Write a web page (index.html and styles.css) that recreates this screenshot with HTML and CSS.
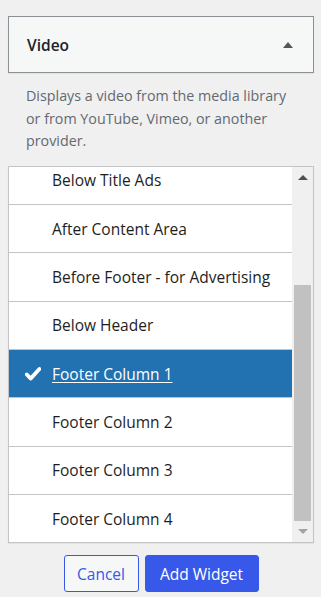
FILE: index.html
```html
<!DOCTYPE html>
<html lang="en">
<head>
<meta charset="utf-8">
<title>Video widget</title>
<link rel="stylesheet" href="styles.css">
</head>
<body>
<div class="panel">
  <div class="widget-head">
    <h3 class="widget-title">Video</h3>
    <span class="toggle-arrow"></span>
  </div>
  <p class="widget-desc">Displays a video from the media library or from YouTube, Vimeo, or another provider.</p>
  <div class="area-list">
    <ul class="areas">
      <li class="area">Below Title Ads</li>
      <li class="area">After Content Area</li>
      <li class="area">Before Footer - for Advertising</li>
      <li class="area">Below Header</li>
      <li class="area selected"><svg class="check" viewBox="0 0 16 14" width="16" height="14"><path d="M1.8 7.4 L5.6 11.6 L14.4 2" fill="none" stroke="#fff" stroke-width="3.8" stroke-linecap="round" stroke-linejoin="round"/></svg><span class="area-label">Footer Column 1</span></li>
      <li class="area">Footer Column 2</li>
      <li class="area">Footer Column 3</li>
      <li class="area">Footer Column 4</li>
    </ul>
    <div class="scrollbar">
      <span class="sb-btn"><span class="sb-arrow up"></span></span>
      <span class="sb-track"><span class="sb-thumb"></span></span>
      <span class="sb-btn"><span class="sb-arrow down"></span></span>
    </div>
  </div>
  <div class="actions">
    <button class="btn btn-secondary">Cancel</button>
    <button class="btn btn-primary">Add Widget</button>
  </div>
</div>
</body>
</html>
```

FILE: styles.css
```css
html, body {
  margin: 0;
  padding: 0;
  background: #f0f0f0;
}
body {
  font-family: "Open Sans", "Noto Sans", sans-serif;
  color: #1e1e1e;
}
.panel {
  width: 306px;
  margin-left: 8px;
  padding-top: 16px;
}
.widget-head {
  box-sizing: border-box;
  height: 57px;
  border: 1px solid #8c8f94;
  background: #f6f7f7;
  display: flex;
  align-items: center;
  justify-content: space-between;
  padding: 0 20px 0 18px;
  box-shadow: 0 1px 1px rgba(0, 0, 0, 0.05);
}
.widget-title {
  margin: 0;
  font-size: 15.5px;
  font-weight: 600;
  color: #1d2327;
}
.toggle-arrow {
  width: 0;
  height: 0;
  border-left: 5px solid transparent;
  border-right: 5px solid transparent;
  border-bottom: 6px solid #50575e;
}
.widget-desc {
  margin: 12px 0 0;
  padding: 0 18px;
  font-size: 14.3px;
  line-height: 22.67px;
  color: #646970;
}
.area-list {
  box-sizing: border-box;
  margin-top: 13px;
  height: 377px;
  border: 1px solid #c3c4c7;
  background: #fff;
  display: flex;
  box-shadow: 0 1px 1px rgba(0, 0, 0, 0.05);
}
.areas {
  flex: 1;
  margin: 0;
  padding: 0;
  list-style: none;
  display: flex;
  flex-direction: column;
  justify-content: flex-end;
  overflow: hidden;
}
.area {
  flex: none;
  height: 47.33px;
  border-bottom: 1px solid #c3c4c7;
  display: flex;
  align-items: center;
  padding-left: 43px;
  font-size: 15.5px;
  color: #1e1e1e;
}
.area:last-child {
  height: 47px;
  border-bottom: 0;
}
.area.selected {
  background: #2271b1;
  color: #fff;
  padding-left: 16px;
}
.check {
  flex: none;
  margin-right: 11px;
}
.area-label {
  text-decoration: underline;
  text-underline-offset: 2px;
}
.scrollbar {
  flex: none;
  width: 21px;
  background: #f0f0f0;
  display: flex;
  flex-direction: column;
}
.sb-btn {
  flex: none;
  height: 21px;
  display: flex;
  align-items: center;
  justify-content: center;
}
.sb-arrow {
  width: 0;
  height: 0;
  border-left: 5px solid transparent;
  border-right: 5px solid transparent;
}
.sb-arrow.up {
  border-bottom: 5px solid #505050;
}
.sb-arrow.down {
  border-top: 5px solid #a3a3a3;
}
.sb-track {
  flex: 1;
  display: flex;
  flex-direction: column;
  justify-content: flex-end;
  align-items: center;
}
.sb-thumb {
  width: 17px;
  height: 236px;
  background: #c1c1c1;
}
.actions {
  margin-top: 12px;
  display: flex;
  justify-content: center;
  gap: 6px;
}
.btn {
  box-sizing: border-box;
  height: 37px;
  border-radius: 3px;
  font-family: "Open Sans", "Noto Sans", sans-serif;
  font-size: 15.5px;
  cursor: pointer;
}
.btn-secondary {
  width: 75px;
  padding: 0;
  border: 1px solid #3858e9;
  background: #f6f7f7;
  color: #3858e9;
}
.btn-primary {
  width: 114px;
  padding: 0;
  border: 1px solid #3858e9;
  background: #3858e9;
  color: #fff;
}
```
